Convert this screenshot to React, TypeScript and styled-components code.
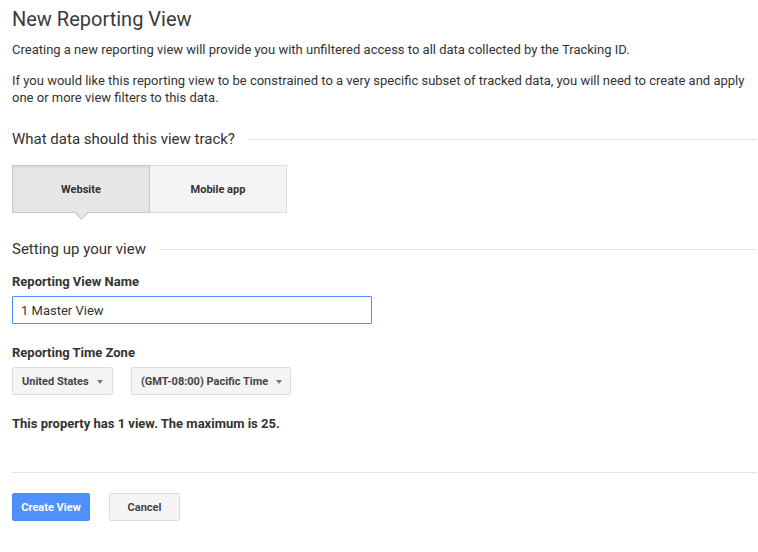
import React from "react";
import styled, { createGlobalStyle } from "styled-components";

const Global = createGlobalStyle`
  html, body { margin: 0; padding: 0; background: #fff; }
  body { font-family: Roboto, "Liberation Sans", Arial, sans-serif; color: #333; }
  * { box-sizing: border-box; }
`;

const Page = styled.div`
  padding: 6px 1px 30px 12px;
  display: flex;
  flex-direction: column;
  align-items: stretch;
`;

const Title = styled.h1`
  margin: 0;
  font-size: 20px;
  line-height: 26px;
  font-weight: 400;
  color: #3a3a3a;
`;

const Para = styled.p<{ $mt: number }>`
  margin: ${(p) => p.$mt}px 0 0;
  font-size: 13px;
  line-height: 17px;
  color: #333;
  padding-right: 10px;
`;

const SectionHead = styled.div<{ $mt: number }>`
  margin-top: ${(p) => p.$mt}px;
  display: flex;
  align-items: center;
  gap: 13px;
  font-size: 15px;
  line-height: 20px;
  color: #333;
  white-space: nowrap;
  &::after {
    content: "";
    flex: 1;
    height: 1px;
    background: #e3e3e3;
  }
`;

const Toggle = styled.div`
  margin-top: 16px;
  display: flex;
  align-self: flex-start;
`;

const ToggleBtn = styled.button<{ $active?: boolean }>`
  position: relative;
  width: ${(p) => (p.$active ? 138 : 137)}px;
  height: 48px;
  font-family: inherit;
  font-size: 11px;
  font-weight: 700;
  color: #333;
  padding: 0;
  cursor: pointer;
  background: ${(p) => (p.$active ? "#e6e6e6" : "#f4f4f4")};
  border: 1px solid ${(p) => (p.$active ? "#c8c8c8" : "#dcdcdc")};
  ${(p) => (p.$active ? "" : "border-left: none;")}
  box-shadow: ${(p) => (p.$active ? "inset 0 1px 2px rgba(0,0,0,0.08)" : "none")};
  ${(p) =>
    p.$active
      ? `
  &::after {
    content: "";
    position: absolute;
    left: 50%;
    bottom: -6px;
    width: 8px;
    height: 8px;
    margin-left: -4px;
    background: #e6e6e6;
    border-right: 1px solid #c8c8c8;
    border-bottom: 1px solid #c8c8c8;
    transform: rotate(45deg);
  }
  `
      : ""}
`;

const Label = styled.div<{ $mt: number }>`
  margin-top: ${(p) => p.$mt}px;
  font-size: 13px;
  line-height: 16px;
  font-weight: 700;
  color: #333;
`;

const TextInput = styled.input`
  margin-top: 6px;
  width: 360px;
  height: 28px;
  border: 1px solid #4d90fe;
  border-radius: 1px;
  padding: 0 8px;
  font-family: inherit;
  font-size: 13px;
  color: #333;
  outline: none;
`;

const SelectRow = styled.div`
  margin-top: 6px;
  display: flex;
  gap: 18px;
`;

const SelectBtn = styled.button<{ $w: number }>`
  width: ${(p) => p.$w}px;
  height: 28px;
  display: flex;
  align-items: center;
  gap: 8px;
  padding: 0 0 0 9px;
  background: #f4f4f4;
  border: 1px solid #dcdcdc;
  border-radius: 2px;
  font-family: inherit;
  font-size: 11px;
  font-weight: 700;
  color: #444;
  cursor: pointer;
`;

const Arrow = styled.span`
  width: 0;
  height: 0;
  border-left: 3.5px solid transparent;
  border-right: 3.5px solid transparent;
  border-top: 4px solid #777;
  margin-top: 1px;
`;

const Divider = styled.hr`
  margin: 40px 0 0;
  border: none;
  height: 1px;
  background: #e3e3e3;
`;

const Actions = styled.div`
  margin-top: 20px;
  display: flex;
  gap: 19px;
`;

const Button = styled.button<{ $primary?: boolean; $w: number }>`
  width: ${(p) => p.$w}px;
  height: 28px;
  border-radius: 2px;
  font-family: inherit;
  font-size: 11px;
  font-weight: 700;
  cursor: pointer;
  padding: 0;
  color: ${(p) => (p.$primary ? "#fff" : "#444")};
  background: ${(p) => (p.$primary ? "#4d90fe" : "#f4f4f4")};
  border: 1px solid ${(p) => (p.$primary ? "#4a8cf7" : "#dcdcdc")};
`;

export default function App() {
  return (
    <>
      <Global />
      <Page>
        <Title>New Reporting View</Title>
        <Para $mt={9}>
          Creating a new reporting view will provide you with unfiltered access to all data
          collected by the Tracking ID.
        </Para>
        <Para $mt={14}>
          If you would like this reporting view to be constrained to a very specific subset of
          tracked data, you will need to create and apply one or more view filters to this data.
        </Para>
        <SectionHead $mt={23}>What data should this view track?</SectionHead>
        <Toggle>
          <ToggleBtn $active>Website</ToggleBtn>
          <ToggleBtn>Mobile app</ToggleBtn>
        </Toggle>
        <SectionHead $mt={26}>Setting up your view</SectionHead>
        <Label $mt={15}>Reporting View Name</Label>
        <TextInput defaultValue="1 Master View" />
        <Label $mt={21}>Reporting Time Zone</Label>
        <SelectRow>
          <SelectBtn $w={101}>
            United States <Arrow />
          </SelectBtn>
          <SelectBtn $w={160}>
            (GMT-08:00) Pacific Time <Arrow />
          </SelectBtn>
        </SelectRow>
        <Label $mt={21}>This property has 1 view. The maximum is 25.</Label>
        <Divider />
        <Actions>
          <Button $primary $w={78}>Create View</Button>
          <Button $w={71}>Cancel</Button>
        </Actions>
      </Page>
    </>
  );
}
